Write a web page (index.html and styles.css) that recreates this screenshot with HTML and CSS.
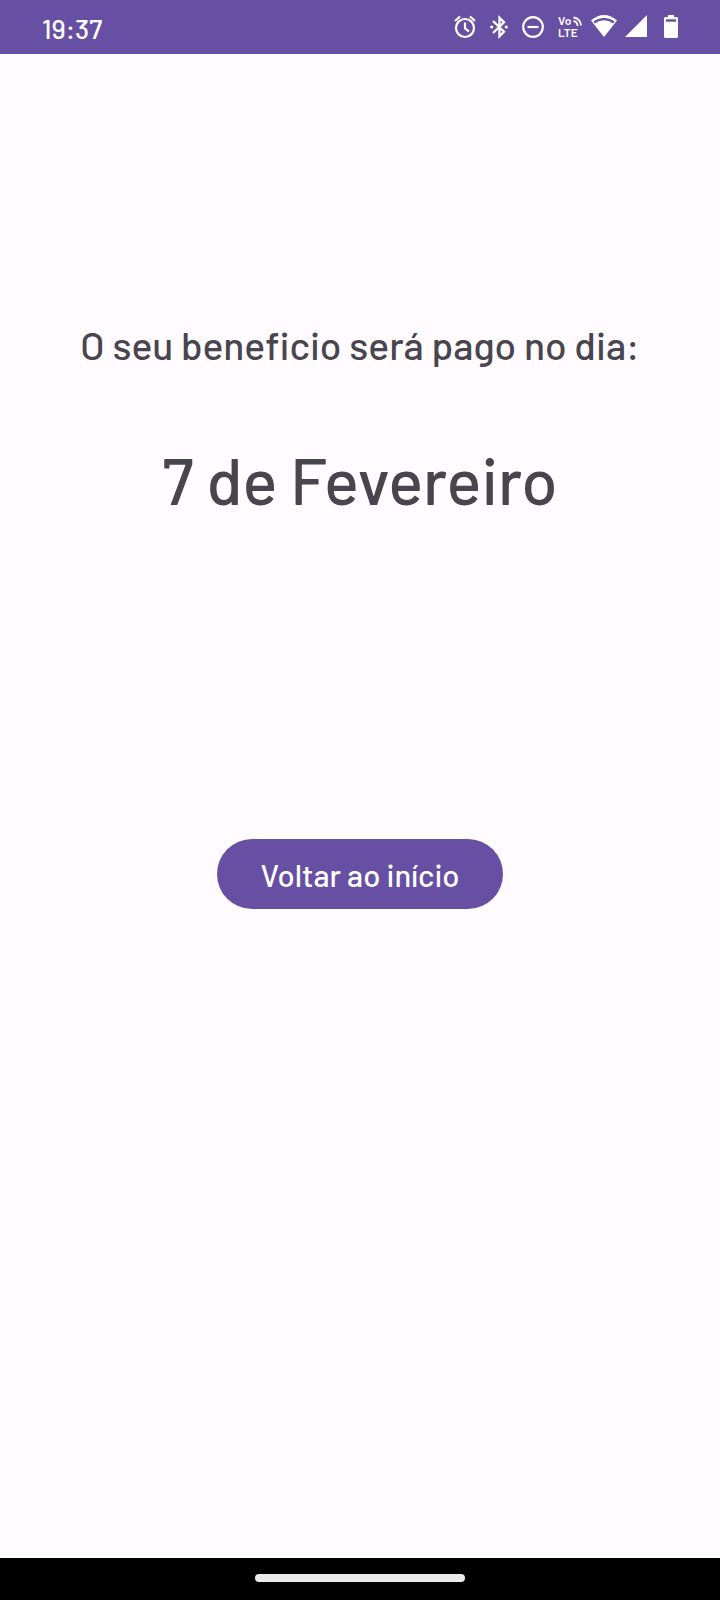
FILE: index.html
```html
<!DOCTYPE html>
<html lang="pt-BR">
<head>
<meta charset="utf-8">
<meta name="viewport" content="width=device-width, initial-scale=1">
<title>Data do benefício</title>
<link rel="stylesheet" href="styles.css">
</head>
<body class="screen">
<header class="status">
  <time class="clock">19:37</time>
  <div class="icons">
    <svg class="icon" width="22" height="26" viewBox="0 0 22 26" role="img" aria-label="Alarme">
      <g fill="none" stroke="#fff" stroke-width="2.2"><circle cx="11" cy="15" r="9"/><path d="M1 8 6 3.500M21 8 16 3.500"/><path d="M11 9.500v6l4 3"/></g>
    </svg>
    <svg class="icon" width="18" height="26" viewBox="0 0 18 26" role="img" aria-label="Bluetooth">
      <path d="M3 8 14 18.800 9.500 23.200V4.800L14 9.200 3 20" fill="none" stroke="#fff" stroke-width="2.300"/><circle cx="1.7" cy="14" r="1.6" fill="#fff"/><circle cx="16.3" cy="14" r="1.6" fill="#fff"/>
    </svg>
    <svg class="icon" width="22" height="26" viewBox="0 0 22 26" role="img" aria-label="Não perturbe">
      <circle cx="11" cy="14" r="9.8" fill="none" stroke="#fff" stroke-width="2.2"/><path d="M5.500 14h11" stroke="#fff" stroke-width="2.200"/>
    </svg>
    <svg class="icon" width="24" height="26" viewBox="0 0 24 26" role="img" aria-label="VoLTE">
      <text class="volte" x="0" y="12">Vo</text><text class="volte" x="0" y="24">LTE</text>
      <path d="M15.500 8a5 5 0 0 1 4 5M15.500 4.500a8 8 0 0 1 7.500 8" fill="none" stroke="#fff" stroke-width="1.8"/>
    </svg>
    <svg class="icon wifi" width="26" height="26" viewBox="0 0 26 26" role="img" aria-label="Wi-Fi">
      <path d="M13 24 0 7.5C7.500 0 18.500 0 26 7.500Z" fill="#fff"/><path d="M3.200 9.500C9 5 17 5 22.800 9.500" fill="none" stroke="#6750a3" stroke-width="2.400"/>
    </svg>
    <svg class="icon signal" width="22" height="26" viewBox="0 0 22 26" role="img" aria-label="Sinal móvel">
      <path d="M22 2v22H0Z" fill="#fff"/>
    </svg>
    <svg class="icon battery" width="14" height="26" viewBox="0 0 14 26" role="img" aria-label="Bateria">
      <path d="M4 2h6v2h2.500A1.500 1.500 0 0 1 14 5.500v18a1.500 1.500 0 0 1-1.500 1.500h-11A1.500 1.500 0 0 1 0 23.500v-18A1.500 1.500 0 0 1 1.500 4H4Z" fill="#fff"/><path d="M2 7.500h10" stroke="#6750a3" stroke-width="2.400"/>
    </svg>
  </div>
</header>
<main class="content">
  <p class="lead">O seu beneficio será pago no dia:</p>
  <h1 class="date">7 de Fevereiro</h1>
  <button class="back" type="button">Voltar ao início</button>
</main>
<footer class="navbar"><div class="handle"></div></footer>
</body>
</html>
```

FILE: styles.css
```css
* { box-sizing: border-box; }

.screen {
  display: flex;
  flex-direction: column;
  min-height: 100vh;
  margin: 0;
  background: #fffbff;
  color: #48454e;
  font-family: Barlow, Roboto, sans-serif;
  font-weight: 500;
}

.status {
  display: flex;
  align-items: center;
  justify-content: space-between;
  height: 54px;
  padding: 0 42px 2px;
  background: #6750a3;
  color: #fff;
}

.clock {
  padding-top: 4px;
  font-size: 27px;
  line-height: 32px;
}

.icons {
  display: flex;
  gap: 14px;
}

.icon {
  display: block;
  overflow: visible;
}
.wifi { margin-left: -5px; }
.signal { margin-left: -6px; }
.battery { margin-left: 3px; }

.volte {
  fill: #fff;
  font-size: 12px;
  font-weight: 600;
}

.content {
  display: flex;
  flex: 1;
  flex-direction: column;
  align-items: center;
  padding: 267px 24px 48px;
  text-align: center;
}

.lead {
  margin: 0;
  font-size: 39px;
  line-height: 48px;
}

.date {
  margin: 70px 0 0;
  font-size: 65px;
  font-weight: 500;
  line-height: 80px;
}

.back {
  min-height: 70px;
  margin-top: 320px;
  padding: 2px 43px 0;
  border: 0;
  border-radius: 35px;
  background: #6750a3;
  color: #fff;
  font: 500 31px/36px Barlow, Roboto, sans-serif;
}

.navbar {
  display: flex;
  align-items: center;
  justify-content: center;
  height: 42px;
  padding-bottom: 2px;
  background: #000;
}

.handle {
  width: 210px;
  height: 8px;
  border-radius: 4px;
  background: #ebebeb;
}
```
